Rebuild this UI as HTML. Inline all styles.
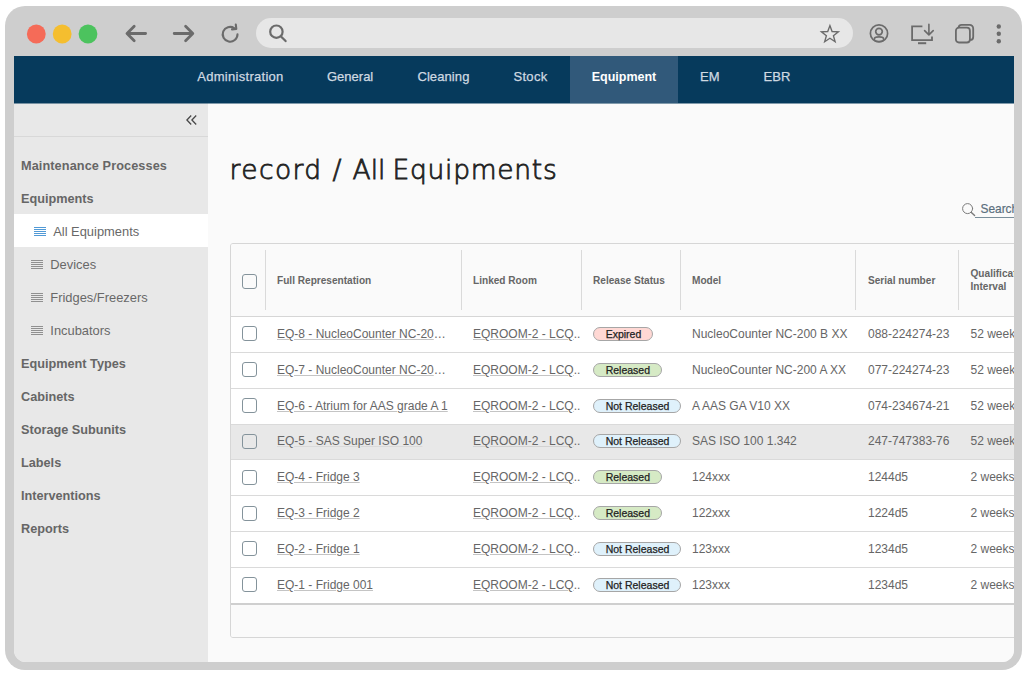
<!DOCTYPE html>
<html lang="en">
<head>
<meta charset="utf-8">
<title>record / All Equipments</title>
<style>
*{box-sizing:border-box;margin:0;padding:0}
html,body{width:1028px;height:677px;overflow:hidden;background:#fff}
body{font-family:"Liberation Sans",Arial,Helvetica,sans-serif;position:relative;color:#555}
.abs{position:absolute}
#frame{position:absolute;left:5px;top:6px;width:1017px;height:664px;background:#cecece;border-radius:20px}
#view{position:absolute;left:14px;top:56px;width:1000px;height:606px;background:#fafafa;overflow:hidden;border-radius:0 0 12px 12px}
#url{position:absolute;left:256px;top:18px;width:597px;height:30px;border-radius:15px;background:#e7e7e7}
.ico{position:absolute;overflow:visible}
/* nav */
#nav{position:absolute;left:0;top:0;width:1000px;height:47px;background:#063a5c}
#nav span{position:absolute;top:0;height:47px;line-height:41px;font-size:13px;color:#cfd9e1;white-space:nowrap;-webkit-text-stroke:0.25px #cfd9e1}
#nav .act{left:556px;width:108px;background:#31597a;text-align:center;color:#fff;font-weight:bold;font-size:12.5px;-webkit-text-stroke:0;line-height:43px}
/* sidebar */
#side{position:absolute;left:0;top:47px;width:194px;height:559px;background:#e8e8e8}
#side .hd{position:absolute;left:0;top:0;width:194px;height:34px;border-bottom:1px solid #d8d8d8}
#side .selbg{position:absolute;left:0;top:111px;width:194px;height:33px;background:#fff}
#side .it{position:absolute;left:0;width:194px;height:33px;line-height:33px;font-size:12.9px;color:#686868;white-space:nowrap}
#side .b{font-weight:bold;padding-left:7px;color:#666;font-size:12.7px}
#side .s{padding-left:36.3px}
.lines{position:absolute;left:16.5px;top:11.7px;width:12.5px;height:9px}
/* main */
#main{position:absolute;left:194px;top:47px;width:806px;height:559px;background:#fafafa;overflow:hidden}
#ttl span{position:absolute;top:0}
#ttl{position:absolute;left:21.5px;top:48.7px;width:400px;height:36px;font-family:"DejaVu Sans","Liberation Sans",sans-serif;font-weight:200;-webkit-text-stroke:0.8px #222;font-size:26.5px;line-height:36px;color:#222;white-space:nowrap;letter-spacing:1.05px}
#srch{position:absolute;left:766.5px;top:97.5px;width:60px;height:17px;font-size:11.9px;line-height:16px;color:#5b6f7d;border-bottom:1px solid #7a8e9a;padding-left:6px;-webkit-text-stroke:.2px #5b6f7d;white-space:nowrap}
#tbl{position:absolute;left:22px;top:140px;width:800px;height:395px;border:1px solid #d6d6d6;border-radius:3px;background:#fafafa;overflow:hidden}
.th{position:relative;height:73px;border-bottom:1px solid #d6d6d6;background:#fafafa}
.th span{position:absolute;top:1px;line-height:72px;font-size:10.1px;font-weight:bold;color:#666;white-space:nowrap}
.sep{position:absolute;top:6px;width:1px;height:60px;background:#dadada}
.tr{position:relative;height:36px;border-bottom:1px solid #dadada;background:#fff}
.tr.hl{background:#e8e8e8;height:35px}
.tr.hl span{line-height:33.4px}
.tr.hl .cb{top:8.5px}
.tr.last{border-bottom:2px solid #cfcfcf;height:37px}
.hl .c1 u{text-decoration-color:#dadada}
.hl .c2 u{text-decoration-color:#d2d2d2}
#navsh{position:absolute;left:0;top:47px;width:1000px;height:1px;background:rgba(6,58,92,.5);z-index:5}
.tr span{position:absolute;top:0;line-height:34.4px;font-size:12px;color:#666;white-space:nowrap}
.tr u{text-decoration:underline;text-decoration-color:#c4c4c4;text-decoration-thickness:1px;text-underline-offset:1.2px}
.cb{position:absolute;left:11px;top:9px;width:15px;height:15px;border:1.3px solid #84939b;border-radius:3px;background:#fff}
.hl .cb{background:#e8e8e8}
.th .cb{background:#fafafa;top:30px}
.c1{left:46px}.c2{left:242px}.c3{left:362px}.c4{left:461px}.c5{left:637px}.c6{left:739.5px}
.tr em{font-style:normal;display:inline-block;height:14px;line-height:12.5px;border-radius:7px;padding:0 10.9px 0 11.7px;font-size:10.5px;color:#222;border:1px solid #a6a6a6;vertical-align:middle;position:relative;top:-1.2px;-webkit-text-stroke:0.25px #222}
.exp{background:#ffd8d4}
.rel{background:#d6eac5}
.nrel{background:#dff1fb}
.tf{height:35px;background:#fafafa}
</style>
</head>
<body>

<div id="frame"></div>
<svg class="ico" style="left:20px;top:20px" width="90" height="28" viewBox="0 0 90 28"><circle cx="16.3" cy="14" r="9.4" fill="#f56b58"/><circle cx="42.2" cy="14" r="9.4" fill="#f5be2f"/><circle cx="68" cy="14" r="9.4" fill="#4cc35e"/></svg>
<svg class="ico" style="left:124px;top:22.7px" width="24" height="22" viewBox="0 0 24 22" fill="none" stroke="#6b6b6b" stroke-width="2.8" stroke-linecap="round" stroke-linejoin="round"><path d="M21.6 10.5H3.4M10.2 3.3L3 10.5l7.2 7.2"/></svg>
<svg class="ico" style="left:171px;top:22.7px" width="24" height="22" viewBox="0 0 24 22" fill="none" stroke="#6b6b6b" stroke-width="2.8" stroke-linecap="round" stroke-linejoin="round"><path d="M3.2 10.5h18.2M14.6 3.3l7.2 7.2-7.2 7.2"/></svg>
<svg class="ico" style="left:220px;top:23px" width="22" height="22" viewBox="0 0 22 22" fill="none" stroke="#6b6b6b" stroke-width="2.1" stroke-linecap="round" stroke-linejoin="round"><path d="M17.5 11.3a7.4 7.4 0 1 1-3.3-6.2"/><path d="M15.8 1.6l.5 4.3-4.3.5"/></svg>
<div id="url"></div>
<svg class="ico" style="left:268px;top:24px" width="20" height="20" viewBox="0 0 20 20" fill="none" stroke="#6b6b6b" stroke-width="2.2" stroke-linecap="round"><circle cx="8.4" cy="7.7" r="6.2"/><path d="M13 12.4l4.6 4.7"/></svg>
<svg class="ico" style="left:819px;top:23px" width="22" height="22" viewBox="0 0 22 22" fill="none" stroke="#6b6b6b" stroke-width="1.35" stroke-linejoin="miter" stroke-miterlimit="10"><path d="M10.90 2.60L13.07 8.51L19.36 8.75L14.42 12.64L16.13 18.70L10.90 15.20L5.67 18.70L7.38 12.64L2.44 8.75L8.73 8.51z"/></svg>
<svg class="ico" style="left:869.2px;top:23.2px" width="21" height="21" viewBox="0 0 21 21" fill="none" stroke="#6b6b6b" stroke-width="1.7"><circle cx="10" cy="10.4" r="8.6"/><circle cx="10" cy="8.6" r="3.3"/><ellipse cx="10" cy="16.2" rx="4.7" ry="2.3"/></svg>
<svg class="ico" style="left:910px;top:22px" width="25" height="24" viewBox="0 0 25 24" fill="none" stroke="#6b6b6b" stroke-width="1.8" stroke-linecap="butt" stroke-linejoin="miter"><path d="M12.4 4.3H2.1v13.9h19.9v-3.6"/><path d="M8 21.2h8.2" stroke-width="2"/><path d="M18.9 2.2v10.6M14.6 8.6l4.3 4.3 4.3-4.3" stroke-width="1.6" stroke-linecap="round" stroke-linejoin="round"/></svg>
<svg class="ico" style="left:954px;top:23px" width="22" height="21" viewBox="0 0 22 21" fill="none" stroke="#6b6b6b" stroke-width="1.8" stroke-linejoin="round" stroke-linecap="round"><rect x="1.9" y="4.7" width="14" height="14.8" rx="3"/><path d="M4.6 4.4a3 3 0 0 1 3-2.5h8a3.6 3.6 0 0 1 3.6 3.6v8.4a3 3 0 0 1-3 3"/></svg>
<svg class="ico" style="left:994.2px;top:23px" width="10" height="22" viewBox="0 0 10 22" fill="#6b6b6b"><circle cx="4.8" cy="3.5" r="2.2"/><circle cx="4.8" cy="10.8" r="2.2"/><circle cx="4.8" cy="18.2" r="2.2"/></svg>

<div id="view">
  <div id="nav">
    <span style="left:183.3px;letter-spacing:.28px">Administration</span>
    <span style="left:313px">General</span>
    <span style="left:403.4px;letter-spacing:.1px">Cleaning</span>
    <span style="left:499.4px;letter-spacing:.35px">Stock</span>
    <span class="act">Equipment</span>
    <span style="left:686px">EM</span>
    <span style="left:749.6px">EBR</span>
  </div>
  <div id="navsh"></div>

  <div id="side">
    <div class="hd"><svg class="ico" style="left:171.9px;top:12px" width="11" height="10" viewBox="0 0 11 10" fill="none" stroke="#4a4a4a" stroke-width="1.3"><path d="M5.2 .5L.9 5l4.3 4.5M10.2 .5L5.9 5l4.3 4.5"/></svg></div>
    <div class="selbg"></div>
    <div class="it b" style="top:47px;letter-spacing:.1px">Maintenance Processes</div>
    <div class="it b" style="top:80px">Equipments</div>
    <div class="it s" style="top:112px;padding-left:39.2px"><svg class="lines" style="left:19.5px" viewBox="0 0 12.5 9" stroke="#3d8fd1" stroke-width="0.9"><path d="M0 .5h12.5M0 2.5h12.5M0 4.5h12.5M0 6.5h12.5M0 8.5h12.5"/></svg>All Equipments</div>
    <div class="it s" style="top:145px"><svg class="lines" style="" viewBox="0 0 12.5 9" stroke="#868686" stroke-width="0.9"><path d="M0 .5h12.5M0 2.5h12.5M0 4.5h12.5M0 6.5h12.5M0 8.5h12.5"/></svg>Devices</div>
    <div class="it s" style="top:178px"><svg class="lines" style="" viewBox="0 0 12.5 9" stroke="#868686" stroke-width="0.9"><path d="M0 .5h12.5M0 2.5h12.5M0 4.5h12.5M0 6.5h12.5M0 8.5h12.5"/></svg>Fridges/Freezers</div>
    <div class="it s" style="top:211px"><svg class="lines" style="" viewBox="0 0 12.5 9" stroke="#868686" stroke-width="0.9"><path d="M0 .5h12.5M0 2.5h12.5M0 4.5h12.5M0 6.5h12.5M0 8.5h12.5"/></svg>Incubators</div>
    <div class="it b" style="top:245px">Equipment Types</div>
    <div class="it b" style="top:278px">Cabinets</div>
    <div class="it b" style="top:311px">Storage Subunits</div>
    <div class="it b" style="top:344px">Labels</div>
    <div class="it b" style="top:377px">Interventions</div>
    <div class="it b" style="top:410px">Reports</div>
  </div>
  <div id="main">
    <h1 id="ttl"><span style="left:0;letter-spacing:1.4px">record</span> <span style="left:103px">/</span> <span style="left:123px;letter-spacing:0">All</span> <span style="left:163px;letter-spacing:.73px">Equipments</span></h1>
    <svg class="ico" style="left:754.1px;top:100.1px" width="14" height="14" viewBox="0 0 14 14" fill="none" stroke="#7a7a7a" stroke-width="1" stroke-linecap="round"><circle cx="5.6" cy="5.6" r="5"/><path d="M9.4 9.4l3.2 3" stroke-width="1.4"/></svg>
    <div id="srch">Search</div>
    <div id="tbl">
      <div class="th">
        <i class="cb"></i>
        <b class="sep" style="left:34px"></b><b class="sep" style="left:230px"></b><b class="sep" style="left:350px"></b><b class="sep" style="left:449px"></b><b class="sep" style="left:624px"></b><b class="sep" style="left:727px"></b>
        <span style="left:46px">Full Representation</span>
        <span style="left:242px">Linked Room</span>
        <span style="left:362px">Release Status</span>
        <span style="left:461px">Model</span>
        <span style="left:637px">Serial number</span>
        <span style="left:739.5px;top:23px;line-height:13px">Qualification<br>Interval</span>
      </div>
      <div class="tr">
        <i class="cb"></i>
        <span class="c1"><u>EQ-8 - NucleoCounter NC-20</u>…</span>
        <span class="c2"><u>EQROOM-2 - LCQ</u>..</span>
        <span class="c3"><em class="exp">Expired</em></span>
        <span class="c4">NucleoCounter NC-200 B XX</span>
        <span class="c5">088-224274-23</span>
        <span class="c6">52 weeks</span>
      </div>
      <div class="tr">
        <i class="cb"></i>
        <span class="c1"><u>EQ-7 - NucleoCounter NC-20</u>…</span>
        <span class="c2"><u>EQROOM-2 - LCQ</u>..</span>
        <span class="c3"><em class="rel">Released</em></span>
        <span class="c4">NucleoCounter NC-200 A XX</span>
        <span class="c5">077-224274-23</span>
        <span class="c6">52 weeks</span>
      </div>
      <div class="tr">
        <i class="cb"></i>
        <span class="c1"><u>EQ-6 - Atrium for AAS grade A 1</u></span>
        <span class="c2"><u>EQROOM-2 - LCQ</u>..</span>
        <span class="c3"><em class="nrel">Not Released</em></span>
        <span class="c4">A AAS GA V10 XX</span>
        <span class="c5">074-234674-21</span>
        <span class="c6">52 weeks</span>
      </div>
      <div class="tr hl">
        <i class="cb"></i>
        <span class="c1"><u>EQ-5 - SAS Super ISO 100</u></span>
        <span class="c2"><u>EQROOM-2 - LCQ</u>..</span>
        <span class="c3"><em class="nrel">Not Released</em></span>
        <span class="c4">SAS ISO 100 1.342</span>
        <span class="c5">247-747383-76</span>
        <span class="c6">52 weeks</span>
      </div>
      <div class="tr">
        <i class="cb" style="top:10px"></i>
        <span class="c1"><u>EQ-4 - Fridge 3</u></span>
        <span class="c2"><u>EQROOM-2 - LCQ</u>..</span>
        <span class="c3"><em class="rel">Released</em></span>
        <span class="c4">124xxx</span>
        <span class="c5">1244d5</span>
        <span class="c6">2 weeks</span>
      </div>
      <div class="tr">
        <i class="cb" style="top:10px"></i>
        <span class="c1"><u>EQ-3 - Fridge 2</u></span>
        <span class="c2"><u>EQROOM-2 - LCQ</u>..</span>
        <span class="c3"><em class="rel">Released</em></span>
        <span class="c4">122xxx</span>
        <span class="c5">1224d5</span>
        <span class="c6">2 weeks</span>
      </div>
      <div class="tr">
        <i class="cb"></i>
        <span class="c1"><u>EQ-2 - Fridge 1</u></span>
        <span class="c2"><u>EQROOM-2 - LCQ</u>..</span>
        <span class="c3"><em class="nrel">Not Released</em></span>
        <span class="c4">123xxx</span>
        <span class="c5">1234d5</span>
        <span class="c6">2 weeks</span>
      </div>
      <div class="tr last">
        <i class="cb"></i>
        <span class="c1"><u>EQ-1 - Fridge 001</u></span>
        <span class="c2"><u>EQROOM-2 - LCQ</u>..</span>
        <span class="c3"><em class="nrel">Not Released</em></span>
        <span class="c4">123xxx</span>
        <span class="c5">1234d5</span>
        <span class="c6">2 weeks</span>
      </div>
      <div class="tf"></div>
    </div>
  </div>
</div>
</body>
</html>
